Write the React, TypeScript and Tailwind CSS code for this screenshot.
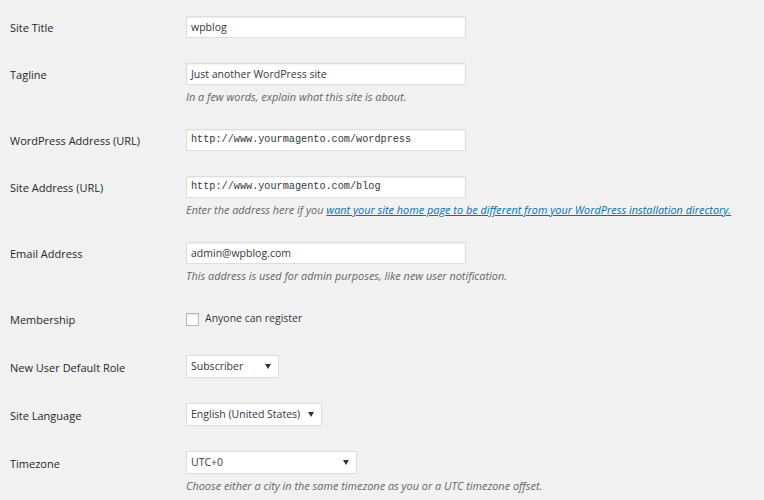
import React from "react";

const label = "w-[186px] shrink-0 pl-[10px] pt-[1px] text-[11px] text-[#23282d]";
const field = "h-[22px] w-[280px] border border-[#ddd] bg-white px-[4px] leading-[20px] text-[#32373c] shadow-[inset_0_1px_2px_rgba(0,0,0,0.07)]";
const desc = "mt-[4px] text-[10.9px] italic leading-[15px] text-[#666]";

function Row({ name, h = 22, children }: { name: string; h?: number; children: React.ReactNode }) {
  return (
    <div className="flex pb-[25px]">
      <div className={label} style={{ lineHeight: `${h}px`, height: h }}>
        {name}
      </div>
      <div className="flex flex-col">{children}</div>
    </div>
  );
}

function TextInput({ value, mono }: { value: string; mono?: boolean }) {
  return (
    <div
      className={`${field} ${
        mono ? "font-['Liberation_Mono',monospace] text-[10.2px]" : "text-[10.5px]"
      }`}
    >
      {value}
    </div>
  );
}

function Select({ value, width }: { value: string; width: string }) {
  return (
    <div
      className={`flex h-[23px] items-center justify-between border border-[#ddd] bg-white pl-[4px] pr-[7px] text-[10.5px] text-[#32373c] ${width}`}
    >
      <span>{value}</span>
      <svg width="6" height="5" viewBox="0 0 6 5" className="shrink-0">
        <polygon points="0,0 6,0 3,5" fill="#333" />
      </svg>
    </div>
  );
}

export default function App() {
  return (
    <div className="min-h-screen w-full bg-[#f1f1f1] pt-[16px] font-['Open_Sans',sans-serif]">
      <Row name="Site Title">
        <TextInput value="wpblog" />
      </Row>

      <Row name="Tagline">
        <TextInput value="Just another WordPress site" />
        <p className={desc}>In a few words, explain what this site is about.</p>
      </Row>

      <Row name="WordPress Address (URL)">
        <TextInput value="http://www.yourmagento.com/wordpress" mono />
      </Row>

      <Row name="Site Address (URL)">
        <TextInput value="http://www.yourmagento.com/blog" mono />
        <p className={`${desc} whitespace-nowrap`}>
          Enter the address here if you{" "}
          <a href="#" className="text-[#0073aa] underline">
            want your site home page to be different from your WordPress installation directory.
          </a>
        </p>
      </Row>

      <Row name="Email Address">
        <TextInput value="admin@wpblog.com" />
        <p className={desc}>This address is used for admin purposes, like new user notification.</p>
      </Row>

      <Row name="Membership">
        <label className="flex h-[22px] items-center gap-[6px] text-[10.5px] text-[#32373c]">
          <span className="h-[13px] w-[13px] border border-[#b4b9be] bg-white shadow-[inset_0_1px_2px_rgba(0,0,0,0.1)]" />
          Anyone can register
        </label>
      </Row>

      <Row name="New User Default Role" h={23}>
        <Select value="Subscriber" width="w-[93px]" />
      </Row>

      <Row name="Site Language" h={23}>
        <Select value="English (United States)" width="w-[136px]" />
      </Row>

      <Row name="Timezone" h={23}>
        <Select value="UTC+0" width="w-[171px]" />
        <p className={desc}>Choose either a city in the same timezone as you or a UTC timezone offset.</p>
      </Row>
    </div>
  );
}
